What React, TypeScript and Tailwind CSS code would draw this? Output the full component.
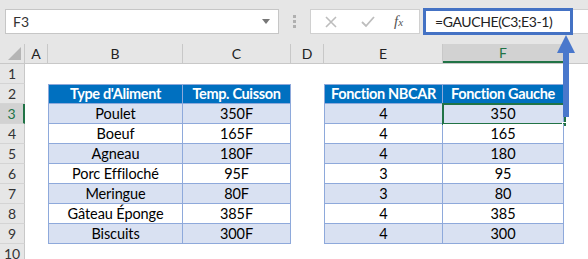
import React from 'react';

const rows = [
  ['Poulet', '350F', '4', '350'],
  ['Boeuf', '165F', '4', '165'],
  ['Agneau', '180F', '4', '180'],
  ['Porc Effiloché', '95F', '3', '95'],
  ['Meringue', '80F', '3', '80'],
  ['Gâteau Éponge', '385F', '4', '385'],
  ['Biscuits', '300F', '4', '300'],
];

const cols = [
  { key: 'A', w: 'w-[23px]' },
  { key: 'B', w: 'w-[135px]' },
  { key: 'C', w: 'w-[108px]' },
  { key: 'D', w: 'w-[33px]' },
  { key: 'E', w: 'w-[119px]' },
  { key: 'F', w: 'w-[121px]' },
];

function RowHead({ n, active }: { n: number; active?: boolean }) {
  return (
    <div
      className={`w-[25px] h-full shrink-0 flex items-center justify-center border-b border-[#d4d4d4] text-[14px] ${
        active ? 'bg-[#d2d2d2] text-[#217346] border-r-2 border-r-[#217346]' : 'bg-[#e6e6e6] text-[#333] border-r border-r-[#c8c8c8]'
      }`}
    >
      {n}
    </div>
  );
}

function HeadCell({ text, w, left }: { text: string; w: string; left?: boolean }) {
  return (
    <div
      className={`${w} h-full shrink-0 flex items-center justify-center bg-[#0070c0] text-white font-bold text-[14.5px] tracking-[-0.35px] whitespace-nowrap border-t border-b border-r border-[#8ea9db] ${
        left ? 'border-l' : ''
      }`}
    >
      {text}
    </div>
  );
}

function DataCell({ text, w, striped, left }: { text: string; w: string; striped: boolean; left?: boolean }) {
  return (
    <div
      className={`${w} h-full shrink-0 flex items-center justify-center text-[14.5px] tracking-[-0.1px] text-black border-b border-r border-[#8ea9db] ${
        striped ? 'bg-[#d9e1f2]' : 'bg-white'
      } ${left ? 'border-l' : ''}`}
    >
      {text}
    </div>
  );
}

export default function App() {
  return (
    <div className="relative w-[588px] h-[259px] overflow-hidden bg-white" style={{ fontFamily: 'Lato, "Liberation Sans", sans-serif' }}>
      {/* formula bar */}
      <div className="h-[44px] bg-[#e6e6e6] flex items-start pt-[9px] pl-[5px]">
        <div className="w-[274px] h-[25px] bg-white border border-[#c6c6c6] flex items-center pl-[7px] pr-[8px] text-[14px] text-[#333]">
          <span className="flex-1">F3</span>
          <svg width="8" height="5" viewBox="0 0 8 5"><path d="M0 0h8L4 5z" fill="#777" /></svg>
        </div>
        <div className="w-[31px] h-[25px] flex flex-col items-center justify-center gap-[2px]">
          <span className="w-[3px] h-[3px] bg-[#b0b0b0]" />
          <span className="w-[3px] h-[3px] bg-[#b0b0b0]" />
          <span className="w-[3px] h-[3px] bg-[#b0b0b0]" />
        </div>
        <div className="w-[110px] h-[25px] bg-white border border-[#d0d0d0] flex items-center">
          <svg className="ml-[14px]" width="12" height="12" viewBox="0 0 12 12"><path d="M1 1l10 10M11 1L1 11" stroke="#bdbdbd" strokeWidth="1.6" /></svg>
          <svg className="ml-[24px]" width="14" height="12" viewBox="0 0 14 12"><path d="M1 6l4 4 8-9" stroke="#bdbdbd" strokeWidth="1.8" fill="none" /></svg>
          <span className="ml-[19px] italic text-[15px] text-[#555]" style={{ fontFamily: '"Liberation Serif", serif' }}>
            f<span className="text-[11px]">x</span>
          </span>
        </div>
        <div className="flex-1 h-[25px] bg-white border-y border-[#d0d0d0] ml-[3px] -mr-px">
          <div className="w-[150px] h-[27px] -mt-[2px] border-[3px] border-[#4472c4] flex items-center pl-[9px] text-[14px] tracking-[-0.4px] text-[#222] whitespace-nowrap">
            =GAUCHE(C3;E3-1)
          </div>
        </div>
      </div>

      {/* column headers */}
      <div className="h-[20px] flex bg-[#e6e6e6] border-b border-[#c8c8c8]">
        <div className="w-[25px] h-full shrink-0 border-r border-[#c8c8c8] flex items-end justify-end p-[3px]">
          <svg width="13" height="13" viewBox="0 0 13 13"><path d="M13 0v13H0z" fill="#b5b5b5" /></svg>
        </div>
        {cols.map((c) => (
          <div
            key={c.key}
            className={`${c.w} h-full shrink-0 flex items-center justify-center text-[14px] border-r border-[#c8c8c8] ${
              c.key === 'F' ? 'bg-[#d2d2d2] text-[#217346] border-b-2 border-b-[#217346]' : 'text-[#222]'
            }`}
          >
            {c.key}
          </div>
        ))}
        <div className="flex-1" />
      </div>

      {/* row 1 */}
      <div className="h-[20px] flex">
        <RowHead n={1} />
      </div>

      {/* row 2 headers */}
      <div className="h-[20px] flex">
        <RowHead n={2} />
        <div className="w-[23px] shrink-0" />
        <HeadCell text="Type d'Aliment" w="w-[135px]" left />
        <HeadCell text="Temp. Cuisson" w="w-[108px]" />
        <div className="w-[33px] shrink-0" />
        <HeadCell text="Fonction NBCAR" w="w-[119px]" left />
        <HeadCell text="Fonction Gauche" w="w-[121px]" />
      </div>

      {rows.map((r, i) => {
        const striped = i % 2 === 0;
        return (
          <div key={i} className="h-[20px] flex">
            <RowHead n={i + 3} active={i === 0} />
            <div className="w-[23px] shrink-0" />
            <DataCell text={r[0]} w="w-[135px]" striped={striped} left />
            <DataCell text={r[1]} w="w-[108px]" striped={striped} />
            <div className="w-[33px] shrink-0" />
            <DataCell text={r[2]} w="w-[119px]" striped={striped} left />
            <div className="relative w-[121px] h-full shrink-0">
              <DataCell text={r[3]} w="w-[121px]" striped={striped} />
              {i === 0 && (
                <>
                  <div className="absolute -left-px -top-px w-[124px] h-[22px] border-2 border-[#217346]" />
                  <div className="absolute left-[119px] top-[18px] w-[5px] h-[5px] bg-[#217346] border border-white" />
                </>
              )}
            </div>
          </div>
        );
      })}

      <div className="h-[20px] flex">
        <RowHead n={10} />
      </div>

      {/* annotation arrow */}
      <svg className="absolute left-[556px] top-[35px]" width="20" height="82" viewBox="0 0 20 82">
        <path d="M10 0L19 18H13V82H7V18H1z" fill="#4a78cc" />
      </svg>
    </div>
  );
}
